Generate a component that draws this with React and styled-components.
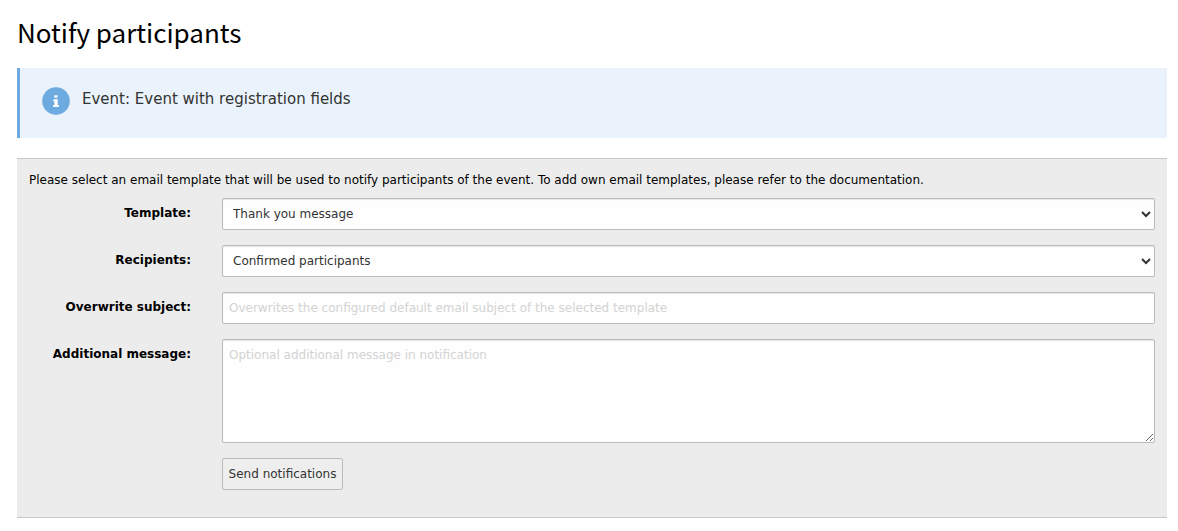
import React from 'react';
import styled, { createGlobalStyle } from 'styled-components';

const GlobalStyle = createGlobalStyle`
  *, *::before, *::after { box-sizing: border-box; }
  body {
    margin: 0;
    background: #fff;
    color: #000;
    font: 12px/16px Verdana, "DejaVu Sans", sans-serif;
  }
`;

const Page = styled.main`
  padding: 16px 11px 0 17px;
`;

const Title = styled.h1`
  margin: 0 0 20px;
  height: 32px;
  font: 400 26px/32px "Noto Sans CJK JP", sans-serif;
  white-space: nowrap;
`;

const Callout = styled.section`
  display: flex;
  align-items: flex-start;
  height: 70px;
  margin-bottom: 20px;
  padding: 19px 22px;
  border-left: 3px solid #6daae0;
  background: #eaf3fb;
`;

const InfoIcon = styled.svg`
  flex: none;
  width: 28px;
  height: 28px;
  margin-right: 12px;
`;

const CalloutText = styled.p`
  margin: 2px 0 0;
  font-size: 15px;
  line-height: 20px;
  color: #333;
`;

const Form = styled.form`
  height: 360px;
  padding: 13px 12px 0;
  border: solid #c8c8c8;
  border-width: 1px 0;
  background: #ececec;
`;

const Intro = styled.p`
  margin: 0 0 10px;
  white-space: nowrap;
`;

const Row = styled.div`
  display: grid;
  grid-template-columns: 162px 1fr;
  column-gap: 31px;
  align-items: start;
  margin-bottom: 15px;
`;

const Label = styled.label`
  padding-top: 7px;
  font-weight: 700;
  text-align: right;
  letter-spacing: ${(p) => p.$tracking || 'normal'};
`;

const controlStyle = `
  display: block;
  width: 100%;
  height: 32px;
  margin: 0;
  padding: 6px;
  border: 1px solid #bbb;
  border-radius: 2px;
  background-color: #fefefe;
  color: #333;
  font: inherit;
  outline: none;
  &::placeholder { color: #d3d3d3; opacity: 1; }
`;

const Select = styled.select`
  ${controlStyle}
  box-shadow: inset 0 1px 1px rgba(0, 0, 0, 0.1);
`;

const Input = styled.input`
  ${controlStyle}
  box-shadow: inset 0 1px 1px rgba(0, 0, 0, 0.1);
`;

const TextArea = styled.textarea`
  ${controlStyle}
  height: 104px;
  padding-top: 7px;
  resize: both;
  box-shadow: inset 0 1px 1px rgba(0, 0, 0, 0.1);
`;

const Button = styled.button`
  grid-column: 2;
  justify-self: start;
  width: 121px;
  height: 32px;
  padding: 0;
  border: 1px solid #bbb;
  border-radius: 2px;
  background: #eee;
  color: #333;
  font: inherit;
  white-space: nowrap;
`;

export default function App() {
  return (
    <>
      <GlobalStyle />
      <Page>
        <Title>Notify participants</Title>
        <Callout>
          <InfoIcon viewBox="0 0 28 28" aria-hidden="true">
            <circle cx="14" cy="14" r="13.8" fill="#6daae0" />
            <path
              fill="#fff"
              d="M12.3 8.2h3.2v2.5h-3.2zM11.3 12.2h4.4v5.7h1.2v2.2h-5.8v-2.2h1.3v-3.5h-1.1z"
            />
          </InfoIcon>
          <CalloutText>Event: Event with registration fields</CalloutText>
        </Callout>
        <Form onSubmit={(e) => e.preventDefault()}>
          <Intro>
            Please select an email template that will be used to notify participants of the event. To
            add own email templates, please refer to the documentation.
          </Intro>
          <Row>
            <Label htmlFor="template">Template:</Label>
            <Select id="template">
              <option>Thank you message</option>
            </Select>
          </Row>
          <Row>
            <Label htmlFor="recipients">Recipients:</Label>
            <Select id="recipients">
              <option>Confirmed participants</option>
            </Select>
          </Row>
          <Row>
            <Label htmlFor="subject">Overwrite subject:</Label>
            <Input
              id="subject"
              placeholder="Overwrites the configured default email subject of the selected template"
            />
          </Row>
          <Row>
            <Label htmlFor="message">Additional message:</Label>
            <TextArea id="message" placeholder="Optional additional message in notification" />
          </Row>
          <Row>
            <Button type="submit">Send notifications</Button>
          </Row>
        </Form>
      </Page>
    </>
  );
}
